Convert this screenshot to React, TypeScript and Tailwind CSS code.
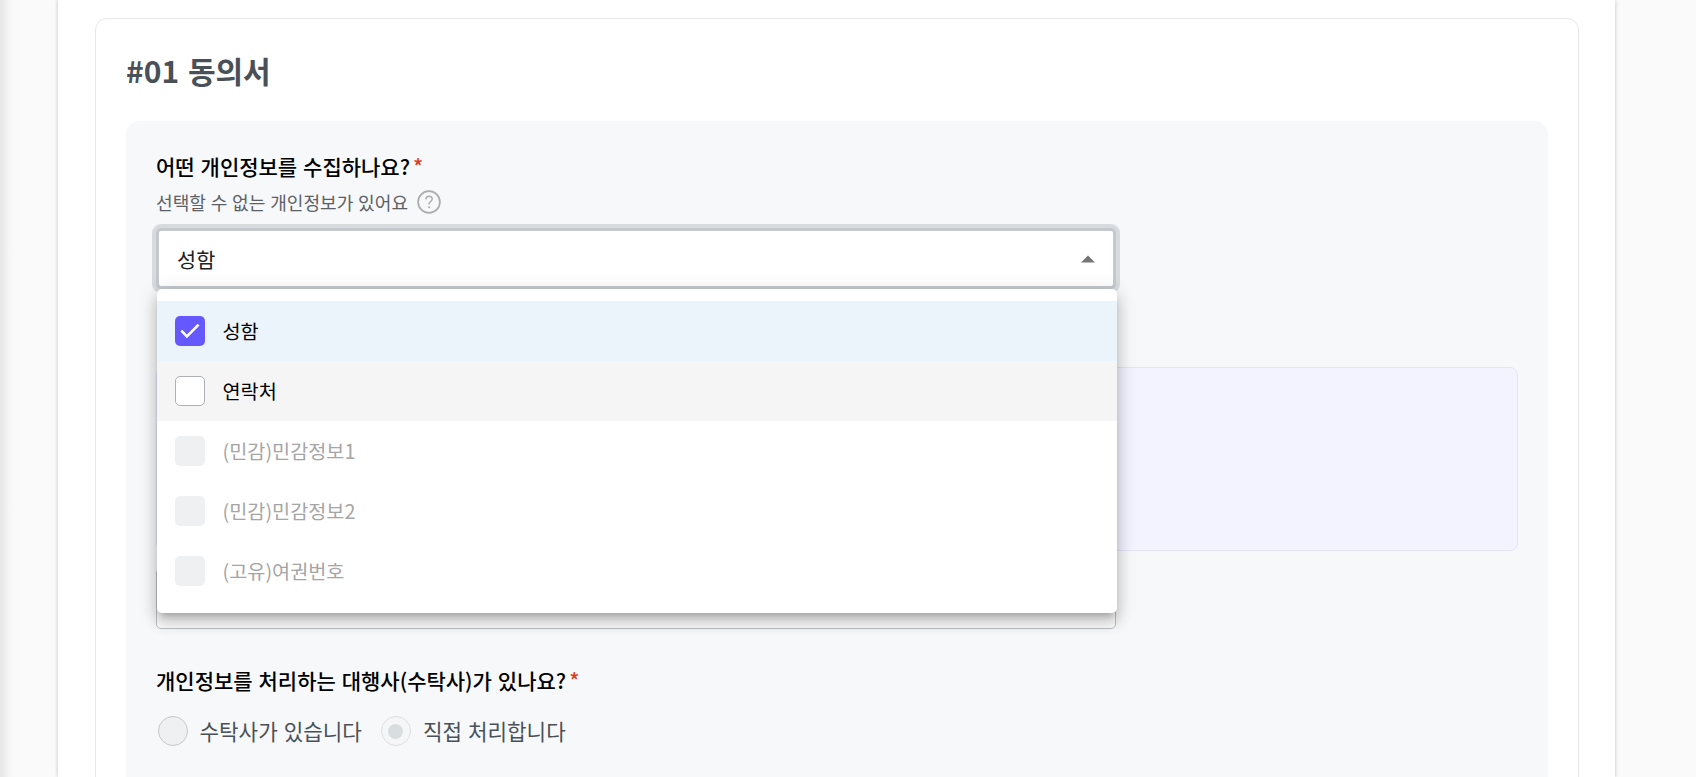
import React from 'react';
import clsx from 'clsx';

interface Option {
  label: string;
  checked?: boolean;
  hovered?: boolean;
  disabled?: boolean;
}

const options: Option[] = [
  { label: '성함', checked: true },
  { label: '연락처', hovered: true },
  { label: '(민감)민감정보1', disabled: true },
  { label: '(민감)민감정보2', disabled: true },
  { label: '(고유)여권번호', disabled: true },
];

const HelpIcon = () => (
  <svg className="h-6 w-6 shrink-0" viewBox="0 0 24 24" fill="none" stroke="#aaadb0" strokeLinecap="round">
    <circle cx="12" cy="12" r="10.9" strokeWidth="1.7" />
    <path d="M8.9 8.8c.3-1.7 1.6-2.6 3.2-2.6 1.8 0 3.1 1.1 3.1 2.8 0 2.5-3.1 2.6-3.1 5.1" strokeWidth="1.5" />
    <circle cx="12.1" cy="17.2" r="1" fill="#aaadb0" stroke="none" />
  </svg>
);

const Checkbox: React.FC<{ checked?: boolean; disabled?: boolean }> = ({ checked, disabled }) => (
  <span
    className={clsx(
      'flex h-[30px] w-[30px] shrink-0 rounded-[5px]',
      checked && 'bg-[#6458fe]',
      disabled && 'bg-[#eff0f2]',
      !checked && !disabled && 'border border-[#adb0b5] bg-white'
    )}
  >
    {checked && (
      <svg className="h-[30px] w-[30px]" viewBox="0 0 30 30" fill="none" stroke="white" strokeWidth="2.6">
        <path d="M6.3 14.7 L11.9 20.3 L23.6 8.6" />
      </svg>
    )}
  </span>
);

const QuestionLabel: React.FC<{ children: React.ReactNode }> = ({ children }) => (
  <p className="flex h-[30px] items-center whitespace-nowrap pt-px text-[21px] font-medium text-black [word-spacing:1.2px]">
    {children}
    <span className="ml-[3px] text-[#e03b24]">*</span>
  </p>
);

const OptionMenu = () => (
  <ul className="absolute left-px top-[61px] z-10 w-[960px] rounded-[5px] bg-white py-3 shadow-[0_6px_6px_-4px_rgba(0,0,0,0.2),0_10px_13px_1px_rgba(0,0,0,0.14),0_4px_18px_3px_rgba(0,0,0,0.12)]">
    {options.map(option => (
      <li
        key={option.label}
        className={clsx(
          'flex h-[60px] items-center gap-[17.5px] pl-[18px] text-[19.7px]',
          option.checked && 'bg-[#ebf3fb]',
          option.hovered && 'bg-[#f5f5f5]',
          option.disabled ? 'text-[#a5a5a5]' : 'text-black'
        )}
      >
        <Checkbox checked={option.checked} disabled={option.disabled} />
        {option.label}
      </li>
    ))}
  </ul>
);

export default function App() {
  return (
    <div className="flex h-[777px] overflow-hidden bg-[#fafafa] font-['Noto_Sans_CJK_KR',sans-serif]">
      <div className="w-[58px] shrink-0 bg-[linear-gradient(to_right,#e7e7e7_0px,#eaeaea_3px,#f5f5f5_8px,#fafafa_14px)]" />
      <main className="w-[1557px] shrink-0 bg-white pl-[37px] pr-9 pt-[18px] shadow-[0_0_4px_rgba(0,0,0,0.24)]">
        <section className="h-[800px] rounded-[12px] border border-[#e6e7e9] px-[30px] pt-[29px]">
          <h2 className="flex h-[45px] items-center text-[30px] font-bold text-[#495057] [word-spacing:2px]">#01 동의서</h2>
          <div className="mt-[28px] h-[700px] w-[1422px] rounded-[14px] bg-[#f6f8fa] pl-[30px] pr-[30px] pt-[30px]">
            <QuestionLabel>어떤 개인정보를 수집하나요?</QuestionLabel>
            <div className="mt-2 flex h-[26px] items-center gap-[9px] whitespace-nowrap text-[18.1px] text-[#5c6066] [word-spacing:0.7px]">
              <span className="pt-px">선택할 수 없는 개인정보가 있어요</span>
              <HelpIcon />
            </div>
            <div className="relative mt-[13px] w-[960px]">
              <div className="flex h-[61px] items-center justify-between rounded-[5px] border-[3px] border-[#c5c8cc] bg-white pl-[18px] pr-[18px] text-[20.8px] text-[#212121] shadow-[0_0_0_4px_#d8dbde]">
                <span className="pt-0.5">성함</span>
                <svg className="h-2 w-[14px]" viewBox="0 0 14 8" fill="#757575">
                  <path d="M0 7.5 L7 .5 L14 7.5 Z" />
                </svg>
              </div>
              <OptionMenu />
            </div>
            <div className="mt-[78px] h-[184px] rounded-[8px] border border-[#e4e3fa] bg-[#f3f3ff]" />
            <div className="mt-[17px] h-[61px] w-[960px] rounded-[5px] border border-[#bfc1c5] bg-white" />
            <div className="mt-[36px]">
              <QuestionLabel>개인정보를 처리하는 대행사(수탁사)가 있나요?</QuestionLabel>
            </div>
            <div className="mt-[21px] flex h-[30px] items-center whitespace-nowrap pl-[2px] text-[21.25px] text-[#495057] [word-spacing:1.2px]">
              <span className="h-[30px] w-[30px] rounded-full border border-[#c6c8cb] bg-[#eff0f2]" />
              <span className="ml-[11.5px]">수탁사가 있습니다</span>
              <span className="ml-[19px] flex h-[30px] w-[30px] items-center justify-center rounded-full border border-[#dcdfe1] bg-[#f4f6f8]">
                <span className="h-[15px] w-[15px] rounded-full bg-[#d8dddf]" />
              </span>
              <span className="ml-3">직접 처리합니다</span>
            </div>
          </div>
        </section>
      </main>
    </div>
  );
}
